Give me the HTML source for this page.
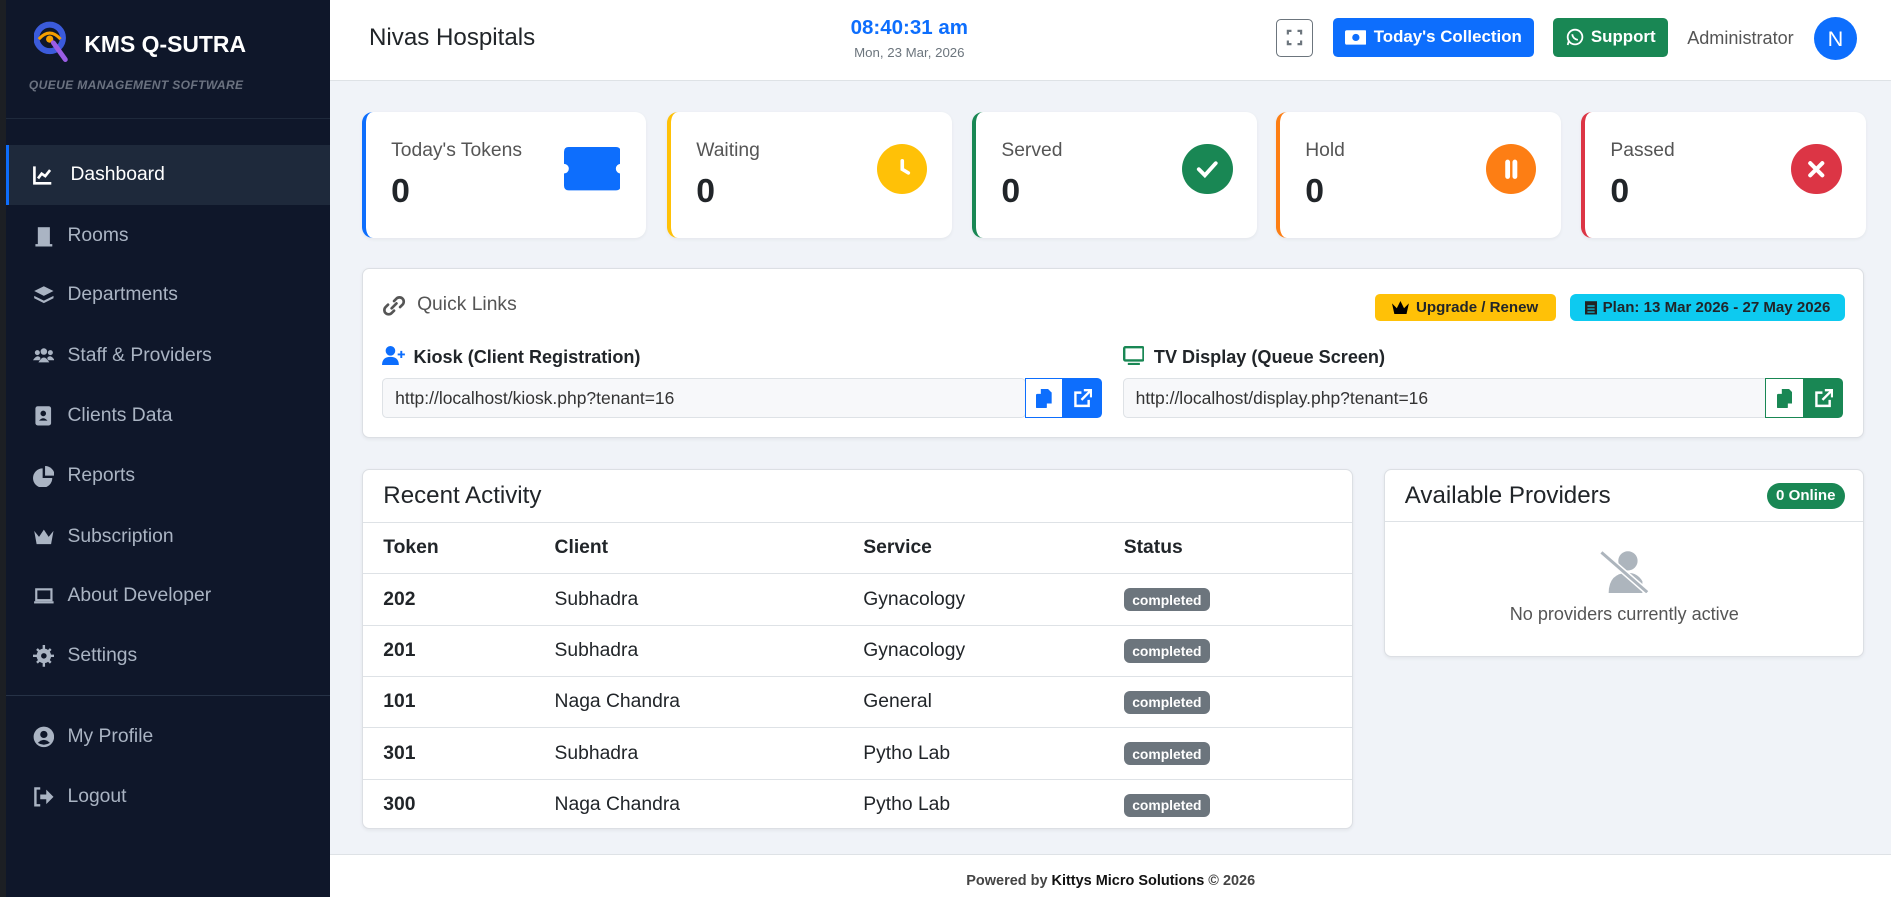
<!DOCTYPE html>
<html><head><meta charset="utf-8">
<style>
*{box-sizing:border-box;margin:0;padding:0}
html,body{width:1891px;height:897px;overflow:hidden}
body{font-family:"Liberation Sans",sans-serif;background:#f0f3f8;color:#212529}
#w{position:absolute;left:0;top:0;width:1568px;height:744px;zoom:1.206;overflow:hidden;background:#f0f3f8}
.a{position:absolute}
#sb{left:0;top:0;width:274px;height:744px;background:#0f172a;border-left:5px solid #1c1f24}
.nav{position:absolute;left:0;width:269px;height:50px;display:flex;align-items:center;color:#aab4c3;font-size:16px}
.nav svg{position:absolute;left:22px;width:18px;height:18px;fill:#aab4c3}
.nav span{position:absolute;left:51px}
.act{background:#1e293b;color:#fff;border-left:3px solid #0d6efd}
.act svg{fill:#fff;stroke:#fff}
#hd{left:274px;top:0;width:1294px;height:67px;background:#fff;border-bottom:1px solid #dee2e6}
.card{position:absolute;top:93px;width:236px;height:104px;background:#fff;border-radius:9px;border-left:4px solid;box-shadow:0 1px 3px rgba(0,0,0,.05)}
.card .l{position:absolute;left:21px;top:23px;font-size:16px;color:#555}
.card .n{position:absolute;left:21px;top:50px;font-size:28px;font-weight:bold}
.card .i{position:absolute;right:20px;top:26px;width:42px;height:42px;border-radius:50%;display:flex;align-items:center;justify-content:center}
.box{position:absolute;background:#fff;border:1px solid #dcdfe4;border-radius:6px;box-shadow:0 1px 3px rgba(0,0,0,.06)}
.btn{position:absolute;border-radius:4px;color:#fff;font-weight:bold;font-size:14px;display:flex;align-items:center;justify-content:center;gap:6px}
.inp{position:absolute;height:33px;background:#f7f8fa;border:1px solid #dee2e6;border-radius:4px;font-size:14.5px;color:#333;padding:7px 10px}
.ib{position:absolute;width:32px;height:33px;display:flex;align-items:center;justify-content:center}
table{border-collapse:collapse;width:100%;font-size:16px}
td,th{text-align:left;height:42.6px;border-top:1px solid #dee2e6;padding-left:17px}
th{font-weight:bold}
td:first-child{font-weight:bold}
.bd{display:inline-block;background:#6c757d;color:#fff;font-size:11.5px;font-weight:bold;padding:3px 7px;border-radius:5px}
</style></head><body><div id="w">
<div id="sb" class="a">
 <svg class="a" style="left:23px;top:17px" width="30" height="36" viewBox="0 0 30 36"><circle cx="13" cy="14" r="11" fill="none" stroke="#3b5bdb" stroke-width="5"/><path d="M4 15 Q13 5 22 15" fill="none" stroke="#f59f00" stroke-width="2.5"/><circle cx="13" cy="15" r="3" fill="#f59f00"/><path d="M16 18 L26 32" stroke="#9b5de5" stroke-width="4" stroke-linecap="round"/></svg>
 <div class="a" style="left:65px;top:26px;color:#fff;font-weight:bold;font-size:19px">KMS Q-SUTRA</div>
 <div class="a" style="left:19px;top:65px;color:#6b7280;font-style:italic;font-weight:bold;font-size:10px;letter-spacing:.3px">QUEUE MANAGEMENT SOFTWARE</div>
 <div class="a" style="left:0;top:98px;width:269px;height:1px;background:#1e293b"></div>
 <div class="nav act" style="top:120px"><svg style="left:19px" viewBox="0 0 18 18"><path d="M2 2V16H16" fill="none" stroke-width="2.2"/><path d="M5 12L8 8L11 10L15 5" fill="none" stroke-width="2.2"/></svg><span style="left:51px">Dashboard</span></div>
 <div class="nav" style="top:171px"><svg viewBox="0 0 18 18"><rect x="4" y="1" width="10" height="15"/><rect x="2" y="15" width="14" height="2"/></svg><span>Rooms</span></div>
 <div class="nav" style="top:220px"><svg viewBox="0 0 18 18"><path d="M9 1L17 5L9 9L1 5Z"/><path d="M1 9L9 13L17 9V11L9 15L1 11Z"/></svg><span>Departments</span></div>
 <div class="nav" style="top:270px"><svg viewBox="0 0 20 18"><circle cx="10" cy="5" r="3"/><circle cx="4" cy="6" r="2.3"/><circle cx="16" cy="6" r="2.3"/><path d="M5 15Q10 6 15 15Z"/><path d="M0 13Q4 7 7 11L6 13Z M20 13Q16 7 13 11L14 13Z"/></svg><span>Staff &amp; Providers</span></div>
 <div class="nav" style="top:320px"><svg viewBox="0 0 18 18"><rect x="2" y="1" width="13" height="16" rx="2"/><circle cx="8.5" cy="7" r="2.3" fill="#0f172a"/><path d="M5 13Q8.5 9 12 13Z" fill="#0f172a"/></svg><span>Clients Data</span></div>
 <div class="nav" style="top:370px"><svg viewBox="0 0 18 18"><path d="M8 2A8 8 0 1 0 16 10H8Z"/><path d="M10 0A8 8 0 0 1 18 8H10Z"/></svg><span>Reports</span></div>
 <div class="nav" style="top:420px"><svg viewBox="0 0 18 18"><path d="M1 4L5 9L9 3L13 9L17 4L15 15H3Z"/></svg><span>Subscription</span></div>
 <div class="nav" style="top:469px"><svg viewBox="0 0 20 18"><rect x="3" y="3" width="14" height="10" fill="none" stroke="#aab4c3" stroke-width="2"/><rect x="1" y="14" width="18" height="2"/></svg><span>About Developer</span></div>
 <div class="nav" style="top:519px"><svg viewBox="0 0 18 18"><circle cx="9" cy="9" r="6"/><path d="M8 0h2v4H8zM8 14h2v4H8zM0 8h4v2H0zM14 8h4v2h-4zM2.6 4L4 2.6l2.8 2.8-1.4 1.4zM11.2 12.6l1.4-1.4 2.8 2.8-1.4 1.4zM2.6 14l2.8-2.8 1.4 1.4L4 15.4zM11.2 5.4L14 2.6 15.4 4l-2.8 2.8z"/><circle cx="9" cy="9" r="2.3" fill="#0f172a"/></svg><span>Settings</span></div>
 <div class="a" style="left:0;top:576px;width:269px;height:1px;background:#263246"></div>
 <div class="nav" style="top:586px"><svg viewBox="0 0 18 18"><circle cx="9" cy="9" r="8.5"/><circle cx="9" cy="7" r="3" fill="#0f172a"/><path d="M4 14Q9 9 14 14Q9 17 4 14Z" fill="#0f172a"/></svg><span>My Profile</span></div>
 <div class="nav" style="top:636px"><svg viewBox="0 0 18 18"><path d="M6 2H2V16H6" fill="none" stroke="#aab4c3" stroke-width="2"/><path d="M6 7H11V3L17 9L11 15V11H6Z"/></svg><span>Logout</span></div>
</div>

<div id="hd" class="a">
 <div class="a" style="left:32px;top:20px;font-size:20px">Nivas Hospitals</div>
 <div class="a" style="left:420px;top:13px;width:120px;text-align:center;color:#0d6efd;font-weight:bold;font-size:17px">08:40:31 am</div>
 <div class="a" style="left:420px;top:37px;width:120px;text-align:center;color:#6c757d;font-size:11px">Mon, 23 Mar, 2026</div>
 <div class="a" style="left:784px;top:16px;width:31px;height:31px;border:1px solid #6c757d;border-radius:4px"><svg width="29" height="29" viewBox="0 0 29 29"><path d="M9 12V9H12M17 9H20V12M20 17V20H17M12 20H9V17" fill="none" stroke="#6c757d" stroke-width="1.8"/></svg></div>
 <div class="btn" style="left:831px;top:15px;width:167px;height:32px;background:#0d6efd"><svg width="18" height="14" viewBox="0 0 18 14"><rect x="0" y="1" width="18" height="12" rx="1.5" fill="#fff"/><circle cx="9" cy="7" r="3" fill="#0d6efd"/></svg>Today's Collection</div>
 <div class="btn" style="left:1014px;top:15px;width:95px;height:32px;background:#198754"><svg width="15" height="15" viewBox="0 0 16 16"><circle cx="8" cy="8" r="6.5" fill="none" stroke="#fff" stroke-width="1.6"/><path d="M1.5 15L2.5 11.5" stroke="#fff" stroke-width="1.6"/><path d="M5.5 5.5Q6 9.5 10.5 10.5" fill="none" stroke="#fff" stroke-width="1.6"/></svg>Support</div>
 <div class="a" style="left:1125px;top:23px;font-size:15px;color:#555">Administrator</div>
 <div class="a" style="left:1230px;top:14px;width:36px;height:36px;border-radius:50%;background:#0d6efd;color:#fff;font-size:18px;text-align:center;line-height:36px">N</div>
</div>

<div class="card" style="left:300px;border-color:#0d6efd"><div class="l">Today's Tokens</div><div class="n">0</div><svg class="a" style="left:164px;top:29px" width="47" height="36" viewBox="0 0 47 36"><path d="M4 0H43Q47 0 47 4V14A4 4 0 0 0 47 22V32Q47 36 43 36H4Q0 36 0 32V22A4 4 0 0 0 0 14V4Q0 0 4 0Z" fill="#0d6efd"/></svg></div>
<div class="card" style="left:553px;border-color:#ffc107"><div class="l">Waiting</div><div class="n">0</div><div class="i" style="background:#ffc107"><svg width="22" height="22" viewBox="0 0 22 22"><path d="M11 4V11L16 14" fill="none" stroke="#fff" stroke-width="3" stroke-linecap="round"/></svg></div></div>
<div class="card" style="left:806px;border-color:#198754"><div class="l">Served</div><div class="n">0</div><div class="i" style="background:#198754"><svg width="22" height="22" viewBox="0 0 22 22"><path d="M4 11L9 16L18 6" fill="none" stroke="#fff" stroke-width="3.2" stroke-linecap="round"/></svg></div></div>
<div class="card" style="left:1058px;border-color:#fd7e14"><div class="l">Hold</div><div class="n">0</div><div class="i" style="background:#fd7e14"><svg width="22" height="22" viewBox="0 0 22 22"><path d="M8 5V17M14 5V17" stroke="#fff" stroke-width="4" stroke-linecap="round"/></svg></div></div>
<div class="card" style="left:1311px;border-color:#dc3545"><div class="l">Passed</div><div class="n">0</div><div class="i" style="background:#dc3545"><svg width="22" height="22" viewBox="0 0 22 22"><path d="M6 6L16 16M16 6L6 16" stroke="#fff" stroke-width="3.4" stroke-linecap="round"/></svg></div></div>

<div class="box" style="left:300px;top:222px;width:1246px;height:141px">
 <svg class="a" style="left:16px;top:22px" width="20" height="18" viewBox="0 0 20 18"><path d="M8 11L12 7M10 5L12 3A3.5 3.5 0 0 1 17 8L15 10M10 13L8 15A3.5 3.5 0 0 1 3 10L5 8" fill="none" stroke="#555" stroke-width="2.2" stroke-linecap="round"/></svg>
 <div class="a" style="left:45px;top:21px;font-size:16px;color:#555">Quick Links</div>
 <div class="a" style="left:839px;top:21px;width:150px;height:22px;background:#ffc107;border-radius:4px;font-size:12.5px;font-weight:bold;display:flex;align-items:center;justify-content:center;gap:6px"><svg width="14" height="11" viewBox="0 0 14 11"><path d="M0 2L4 6L7 0L10 6L14 2L12 11H2Z"/></svg>Upgrade / Renew</div>
 <div class="a" style="left:1001px;top:21px;width:228px;height:22px;background:#0dcaf0;border-radius:5px;font-size:12.5px;font-weight:bold;display:flex;align-items:center;justify-content:center;gap:5px"><svg width="10" height="12" viewBox="0 0 10 12"><rect x="0" y="1" width="10" height="11" fill="#222"/><path d="M2 5H8M2 7.5H8M2 10H8" stroke="#0dcaf0"/></svg>Plan: 13 Mar 2026 - 27 May 2026</div>
 <svg class="a" style="left:16px;top:64px" width="20" height="16" viewBox="0 0 20 16"><circle cx="7" cy="4" r="4" fill="#0d6efd"/><path d="M0 16Q0 9 7 9Q14 9 14 16Z" fill="#0d6efd"/><path d="M16 4V10M13 7H19" stroke="#0d6efd" stroke-width="1.6"/></svg>
 <div class="a" style="left:42px;top:65px;font-size:15px;font-weight:bold">Kiosk (Client Registration)</div>
 <div class="inp" style="left:16px;top:91px;width:534px">http://localhost/kiosk.php?tenant=16</div>
 <div class="ib" style="left:549px;top:91px;border:1px solid #0d6efd;background:#fff"><svg width="13" height="16" viewBox="0 0 13 16"><rect x="0" y="4" width="9" height="12" rx="1" fill="#0d6efd"/><path d="M4 0H10L13 3V12H4Z" fill="#0d6efd"/></svg></div>
 <div class="ib" style="left:581px;top:91px;background:#0d6efd;border-radius:0 4px 4px 0"><svg width="16" height="16" viewBox="0 0 16 16"><path d="M7 3H2V14H13V9" fill="none" stroke="#fff" stroke-width="2"/><path d="M9 1H15V7M15 1L7 9" fill="none" stroke="#fff" stroke-width="2"/></svg></div>
 <svg class="a" style="left:630px;top:64px" width="18" height="16" viewBox="0 0 18 16"><rect x="1" y="1" width="16" height="11" rx="1" fill="none" stroke="#198754" stroke-width="2"/><rect x="4" y="14" width="10" height="2" fill="#198754"/></svg>
 <div class="a" style="left:656px;top:65px;font-size:15px;font-weight:bold">TV Display (Queue Screen)</div>
 <div class="inp" style="left:630px;top:91px;width:535px">http://localhost/display.php?tenant=16</div>
 <div class="ib" style="left:1163px;top:91px;border:1px solid #198754;background:#fff"><svg width="13" height="16" viewBox="0 0 13 16"><rect x="0" y="4" width="9" height="12" rx="1" fill="#198754"/><path d="M4 0H10L13 3V12H4Z" fill="#198754"/></svg></div>
 <div class="ib" style="left:1195px;top:91px;background:#198754;border-radius:0 4px 4px 0"><svg width="16" height="16" viewBox="0 0 16 16"><path d="M7 3H2V14H13V9" fill="none" stroke="#fff" stroke-width="2"/><path d="M9 1H15V7M15 1L7 9" fill="none" stroke="#fff" stroke-width="2"/></svg></div>
</div>

<div class="box" style="left:300px;top:389px;width:822px;height:298px;overflow:hidden">
 <div style="height:43px;padding:10px 17px;font-size:20px">Recent Activity</div>
 <table>
  <colgroup><col style="width:142px"><col style="width:256px"><col style="width:216px"><col></colgroup>
  <tr><th>Token</th><th>Client</th><th>Service</th><th>Status</th></tr>
  <tr><td>202</td><td>Subhadra</td><td>Gynacology</td><td><span class="bd">completed</span></td></tr>
  <tr><td>201</td><td>Subhadra</td><td>Gynacology</td><td><span class="bd">completed</span></td></tr>
  <tr><td>101</td><td>Naga Chandra</td><td>General</td><td><span class="bd">completed</span></td></tr>
  <tr><td>301</td><td>Subhadra</td><td>Pytho Lab</td><td><span class="bd">completed</span></td></tr>
  <tr><td>300</td><td>Naga Chandra</td><td>Pytho Lab</td><td><span class="bd">completed</span></td></tr>
 </table>
</div>

<div class="box" style="left:1148px;top:389px;width:398px;height:156px">
 <div class="a" style="left:16px;top:10px;font-size:20px">Available Providers</div>
 <div class="a" style="left:316px;top:11px;width:65px;height:21px;border-radius:11px;background:#198754;color:#fff;font-size:12.5px;font-weight:bold;text-align:center;line-height:21px">0 Online</div>
 <div class="a" style="left:0;top:42px;width:396px;height:1px;background:#dee2e6"></div>
 <svg class="a" style="left:177px;top:66px" width="44" height="36" viewBox="0 0 44 36"><circle cx="24" cy="9" r="8" fill="#adb5bd"/><path d="M8 36Q8 19 24 19Q32 19 36 26V36Z" fill="#adb5bd"/><path d="M2 2L40 35" stroke="#fff" stroke-width="5"/><path d="M2 2L40 35" stroke="#adb5bd" stroke-width="2.5"/></svg>
 <div class="a" style="left:0;top:111px;width:396px;text-align:center;font-size:15px;color:#555">No providers currently active</div>
</div>

<div class="a" style="left:274px;top:708px;width:1294px;height:36px;background:#fff;border-top:1px solid #dee2e6;text-align:center;font-size:12px;font-weight:bold;color:#444;padding-top:15px">Powered by <span style="color:#111">Kittys Micro Solutions</span> © 2026</div>
</div></body></html>
